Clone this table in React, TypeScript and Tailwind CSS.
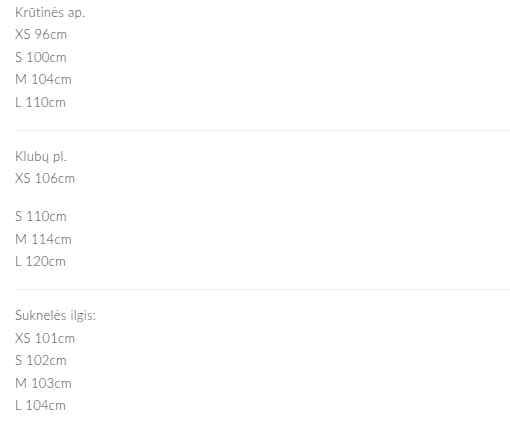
const Line = ({ children }: { children: React.ReactNode }) => (
  <div className="h-[22.4px] leading-[22.4px]">{children}</div>
);

const Divider = () => <div className="h-[1px] bg-[#ececec] mt-[17px] mb-[14px]" />;

export default function App() {
  return (
    <div
      className="bg-white min-h-screen pl-[15px] pt-[1px] text-[13px] font-light tracking-[0.3px] text-[#4a4a4a]"
      style={{ fontFamily: 'Lato, "Open Sans", sans-serif' }}
    >
      <div>
        <Line>Krūtinės ap.</Line>
        <Line>XS 96cm</Line>
        <Line>S 100cm</Line>
        <Line>M 104cm</Line>
        <Line>L 110cm</Line>
      </div>
      <Divider />
      <div>
        <Line>Klubų pl.</Line>
        <Line>XS 106cm</Line>
        <div className="mt-[15.5px]">
          <Line>S 110cm</Line>
          <Line>M 114cm</Line>
          <Line>L 120cm</Line>
        </div>
      </div>
      <Divider />
      <div>
        <Line>Suknelės ilgis:</Line>
        <Line>XS 101cm</Line>
        <Line>S 102cm</Line>
        <Line>M 103cm</Line>
        <Line>L 104cm</Line>
      </div>
    </div>
  );
}
